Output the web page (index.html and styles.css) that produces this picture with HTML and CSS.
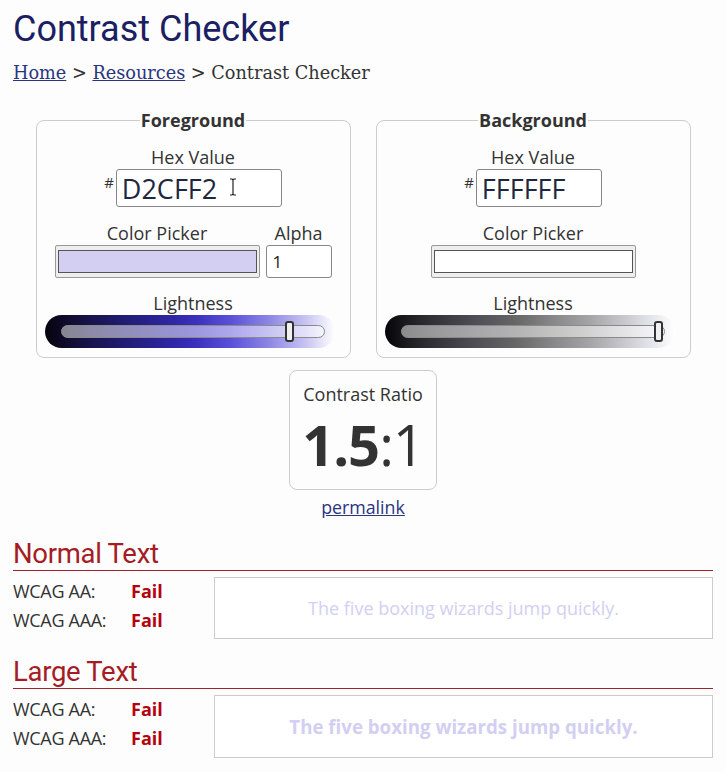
FILE: index.html
```html
<!DOCTYPE html>
<html lang="en">
<head>
  <meta charset="UTF-8" />
  <meta name="viewport" content="width=device-width, initial-scale=1.0"/>
  <title>Contrast Checker</title>
  <link rel="stylesheet" href="styles.css">
</head>
<body>
  <h1>Contrast Checker</h1>
  <nav class="crumbs">
    <a href="#">Home</a> &gt; <a href="#">Resources</a> &gt; Contrast Checker
  </nav>

  <div class="pickers">
    <fieldset class="picker">
      <legend>Foreground</legend>
      <div class="label">Hex Value</div>
      <div class="hex-row">
        <span class="hash">#</span>
        <span class="hex-wrap">
          <input class="hex" id="fg-hex" type="text" value="D2CFF2" />
          <svg class="ibeam" width="8" height="18" viewBox="0 0 8 18"><path d="M1 1h2l1 1 1-1h2M4 2v14M1 17h2l1-1 1 1h2" fill="none" stroke="#222" stroke-width="1.2"/></svg>
        </span>
      </div>
      <div class="pick-row">
        <div class="pick-col">
          <div class="label">Color Picker</div>
          <div class="swatch"><span style="background:#d2cff2"></span></div>
        </div>
        <div class="alpha-col">
          <div class="label">Alpha</div>
          <input class="alpha" type="text" value="1" />
        </div>
      </div>
      <div class="label">Lightness</div>
      <div class="lightness fg-grad">
        <div class="track"></div>
        <div class="thumb" style="left:240px"></div>
      </div>
    </fieldset>

    <fieldset class="picker">
      <legend>Background</legend>
      <div class="label">Hex Value</div>
      <div class="hex-row">
        <span class="hash">#</span>
        <span class="hex-wrap">
          <input class="hex short" id="bg-hex" type="text" value="FFFFFF" />
        </span>
      </div>
      <div class="pick-row">
        <div class="pick-col">
          <div class="label">Color Picker</div>
          <div class="swatch"><span style="background:#ffffff"></span></div>
        </div>
      </div>
      <div class="label">Lightness</div>
      <div class="lightness bg-grad">
        <div class="track"></div>
        <div class="thumb" style="left:269px"></div>
      </div>
    </fieldset>
  </div>

  <div class="ratio-area">
    <div class="ratio-box">
      <div class="ratio-label">Contrast Ratio</div>
      <div class="ratio"><strong>1.5</strong>:1</div>
    </div>
    <a class="permalink" href="#">permalink</a>
  </div>

  <section class="result">
    <h2>Normal Text</h2>
    <div class="result-row">
      <div class="grades">
        <div><span class="grade-name">WCAG AA:</span><span class="fail">Fail</span></div>
        <div><span class="grade-name">WCAG AAA:</span><span class="fail">Fail</span></div>
      </div>
      <div class="sample">The five boxing wizards jump quickly.</div>
    </div>
  </section>

  <section class="result">
    <h2>Large Text</h2>
    <div class="result-row">
      <div class="grades">
        <div><span class="grade-name">WCAG AA:</span><span class="fail">Fail</span></div>
        <div><span class="grade-name">WCAG AAA:</span><span class="fail">Fail</span></div>
      </div>
      <div class="sample large">The five boxing wizards jump quickly.</div>
    </div>
  </section>
</body>
</html>
```

FILE: styles.css
```css
* {
  box-sizing: border-box;
}

body {
  margin: 0;
  padding: 0 13px;
  background: #fdfdfd;
  color: #333;
  font-family: 'Open Sans', sans-serif;
  font-size: 18px;
}

h1 {
  font-family: Roboto, sans-serif;
  font-weight: 400;
  font-size: 36px;
  color: #1b2063;
  margin: 9px 0 0;
  line-height: 40px;
}

.crumbs {
  font-family: 'DejaVu Serif', serif;
  font-size: 17.7px;
  color: #333;
  margin-top: 12px;
  line-height: 24px;
}

.crumbs a {
  color: #2a3580;
}

.pickers {
  display: flex;
  justify-content: center;
  gap: 25px;
  margin-top: 23px;
}

.picker {
  width: 315px;
  margin: 0;
  border: 1px solid #ccc;
  border-radius: 8px;
  padding: 13px 10px 9px;
  text-align: center;
}

.picker legend {
  margin: 0 auto;
  padding: 0 1px;
  font-weight: 700;
  font-size: 18px;
  line-height: 24px;
  color: #333;
}

.label {
  font-size: 18px;
  line-height: 24px;
}

.hex-row {
  display: flex;
  justify-content: center;
  align-items: flex-start;
}

.hash {
  font-size: 15px;
  line-height: 15px;
  margin-top: 6px;
  margin-right: 2px;
}

.hex-wrap {
  position: relative;
}

.hex {
  width: 166px;
  height: 38px;
  border: 1px solid #888;
  border-radius: 3px;
  background: #fff;
  font-family: 'Open Sans', sans-serif;
  font-size: 27px;
  color: #1e2740;
  padding: 0 5px;
}

.hex.short {
  width: 126px;
}

.ibeam {
  position: absolute;
  left: 113px;
  top: 9px;
}

.pick-row {
  display: flex;
  justify-content: center;
  gap: 6px;
  margin-top: 14px;
}

.swatch {
  width: 205px;
  height: 33px;
  border: 1px solid #999;
  border-radius: 2px;
  background: #eee;
  padding: 4px 2px;
}

.swatch span {
  display: block;
  height: 100%;
  border: 1px solid #555;
}

.alpha {
  width: 66px;
  height: 33px;
  border: 1px solid #888;
  border-radius: 3px;
  background: #fff;
  font-family: 'Open Sans', sans-serif;
  font-size: 17px;
  color: #222;
  padding: 0 6px;
}

.pick-row + .label {
  margin-top: 13px;
}

.lightness {
  position: relative;
  width: 290px;
  height: 33px;
  margin: 0 0 0 -2px;
  border-radius: 17px;
  display: flex;
  align-items: center;
  padding: 0 10px 0 16px;
}

.fg-grad {
  background: linear-gradient(to right, #05030c 0%, #100c2e 8%, #17134a 15%, #221d78 29%, #3027a8 45%, #3a30bc 52%, #5a50d8 64%, #8c85e4 77%, #c8c4f2 90%, #fff 100%);
}

.bg-grad {
  background: linear-gradient(to right, #050408 0%, #1d1c20 8%, #2f2e33 15%, #4b4a52 29%, #666 45%, #858587 57%, #a3a3a5 70%, #c6c6cc 82%, #e2e2ea 91%, #fff 100%);
}

.track {
  flex: 1;
  height: 13px;
  border: 1px solid #8a8a8a;
  border-radius: 7px;
  background: rgba(255, 255, 255, 0.5);
}

.thumb {
  position: absolute;
  top: 6px;
  width: 9px;
  height: 21px;
  border: 2px solid #333;
  border-radius: 3px;
  background: #f0f0f0;
}

.ratio-area {
  text-align: center;
  margin-top: 12px;
}

.ratio-box {
  display: inline-block;
  width: 148px;
  height: 120px;
  border: 1px solid #ccc;
  border-radius: 8px;
  padding-top: 11px;
}

.ratio-label {
  font-size: 18px;
  line-height: 24px;
}

.ratio {
  font-size: 56px;
  line-height: 60px;
  margin-top: 8px;
  letter-spacing: -1px;
  color: #333;
}

.ratio strong {
  font-weight: 700;
}

.permalink {
  display: block;
  width: max-content;
  margin: 4px auto 0;
  color: #2a3580;
  font-size: 17.8px;
  line-height: 26px;
}

.result {
  margin-top: 19px;
}

.result + .result {
  margin-top: 18px;
}

.result h2 {
  font-family: Roboto, sans-serif;
  font-weight: 400;
  font-size: 27.5px;
  color: #a51c24;
  line-height: 30px;
  margin: 0;
  padding-bottom: 1px;
  border-bottom: 1px solid #a02030;
  letter-spacing: -0.3px;
}

.result-row {
  display: flex;
  margin-top: 6px;
}

.grades {
  width: 201px;
}

.grades div {
  line-height: 29px;
  font-size: 18px;
}

.grade-name {
  display: inline-block;
  width: 118px;
  letter-spacing: -0.3px;
  color: #333;
}

.fail {
  font-weight: 700;
  color: #b4000f;
  font-size: 18px;
}

.sample {
  flex: 1;
  height: 62px;
  border: 1px solid #ccc;
  display: flex;
  align-items: center;
  justify-content: center;
  color: #d2cff2;
  background: #fff;
  font-size: 18px;
}

.sample.large {
  font-size: 18.7px;
  font-weight: 700;
  height: 63px;
}
```
